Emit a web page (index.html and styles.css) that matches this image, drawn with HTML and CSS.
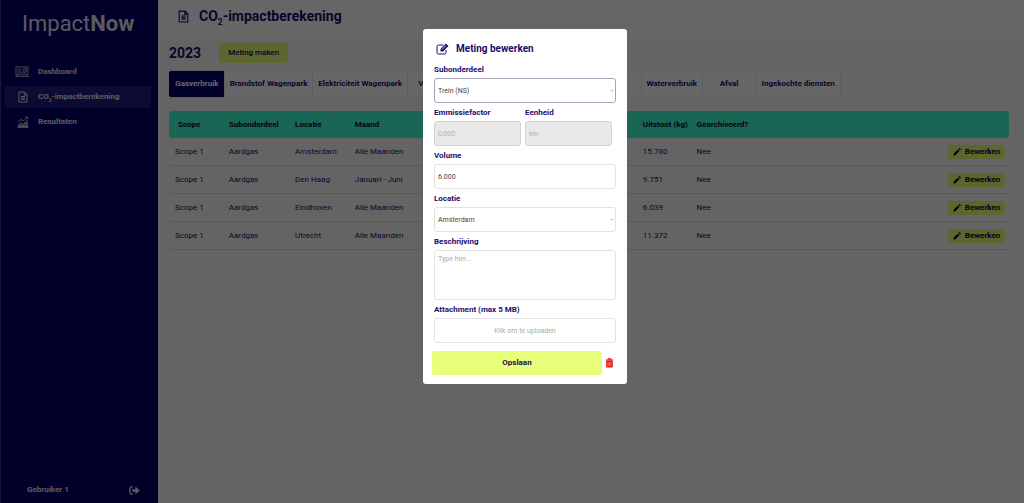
FILE: index.html
```html
<!DOCTYPE html>
<html lang="nl">
<head>
<meta charset="utf-8">
<title>ImpactNow</title>
<link rel="stylesheet" href="styles.css">
</head>
<body>
<svg class="defs" aria-hidden="true">
  <symbol id="doc" viewBox="0 0 24 24"><path d="M4 2h11l5 5v15H4zM14.500 2v6H20M8 11h8M8 14h8M8 17h8" fill="none" stroke="currentColor" stroke-width="2"/></symbol>
  <symbol id="pencil" viewBox="0 0 24 24"><path d="M1 23l2-7L14 5l5 5L8 21zM16 3l2-2q2-1 4 1t1 4l-2 2z" fill="currentColor"/></symbol>
</svg>
<div class="app">
  <aside class="sidebar">
    <div class="logo">Impact<b>Now</b></div>
    <nav class="nav">
      <a class="nav-item" href="#"><svg class="nav-icon wide" viewBox="0 0 30 24"><path d="M2 1h26v17H2zM0 22h30M5 6h8M5 10h8M5 14h18M4 18v4M26 18v4" fill="none" stroke="currentColor" stroke-width="1.600"/><circle cx="21" cy="8" r="4" fill="none" stroke="currentColor" stroke-width="1.600"/><path d="M21 8V4M21 8h4" stroke="currentColor"/></svg>Dashboard</a>
      <a class="nav-item active" href="#"><svg class="nav-icon"><use href="#doc"/></svg><span>CO<sub>2</sub>-impactberekening</span></a>
      <a class="nav-item" href="#"><svg class="nav-icon" viewBox="0 0 24 24"><path d="M1 22h22M4 22v-6M8 22v-9M12 22v-7M16 22V12M20 22V9" stroke="currentColor" stroke-width="2.600"/><path d="M2 12l6-5 5 3 8-8M16 2h5v5" fill="none" stroke="currentColor" stroke-width="1.600"/></svg>Resultaten</a>
    </nav>
    <div class="user"><span>Gebruiker 1</span><button class="logout" aria-label="Uitloggen"><svg viewBox="0 0 24 20"><path d="M9 2H5Q2 2 2 5v10q0 3 3 3h4" fill="none" stroke="currentColor" stroke-width="3"/><path d="M7 7h7V1l10 9-10 9v-6H7z" fill="currentColor"/></svg></button></div>
  </aside>
  <main class="main">
    <header class="page-head"><svg class="page-icon"><use href="#doc"/></svg><h1>CO<sub>2</sub>-impactberekening</h1></header>
    <div class="content">
      <div class="toolbar"><h2>2023</h2><button class="create">Meting maken</button></div>
      <div class="tabs" role="tablist">
        <button class="tab selected" role="tab" aria-selected="true">Gasverbruik</button>
        <button class="tab" role="tab">Brandstof Wagenpark</button>
        <button class="tab" role="tab">Elektriciteit Wagenpark</button>
        <button class="tab" role="tab">Vervoer</button>
        <button class="tab" role="tab">Zakelijk verkeer</button>
        <button class="tab" role="tab">Woon-werkverkeer</button>
        <button class="tab" role="tab">Waterverbruik</button>
        <button class="tab" role="tab">Afval</button>
        <button class="tab" role="tab">Ingekochte diensten</button>
      </div>
      <table class="data">
        <colgroup><col class="c-scope"><col class="c-sub"><col class="c-loc"><col class="c-month"><col class="c-out"><col class="c-arch"><col class="c-act"></colgroup>
        <thead><tr><th>Scope</th><th>Subonderdeel</th><th>Locatie</th><th>Maand</th><th>Uitstoot (kg)</th><th>Gearchiveerd?</th><th></th></tr></thead>
        <tbody>
          <tr><td>Scope 1</td><td>Aardgas</td><td>Amsterdam</td><td>Alle Maanden</td><td>15.780</td><td>Nee</td><td><button class="edit"><svg><use href="#pencil"/></svg>Bewerken</button></td></tr>
          <tr><td>Scope 1</td><td>Aardgas</td><td>Den Haag</td><td>Januari - Juni</td><td>9.751</td><td>Nee</td><td><button class="edit"><svg><use href="#pencil"/></svg>Bewerken</button></td></tr>
          <tr><td>Scope 1</td><td>Aardgas</td><td>Eindhoven</td><td>Alle Maanden</td><td>6.039</td><td>Nee</td><td><button class="edit"><svg><use href="#pencil"/></svg>Bewerken</button></td></tr>
          <tr><td>Scope 1</td><td>Aardgas</td><td>Utrecht</td><td>Alle Maanden</td><td>11.372</td><td>Nee</td><td><button class="edit"><svg><use href="#pencil"/></svg>Bewerken</button></td></tr>
        </tbody>
      </table>
    </div>
  </main>
</div>
<div class="overlay">
  <form class="modal" role="dialog" aria-labelledby="modal-title">
    <div class="modal-head"><svg viewBox="0 0 26 24"><path d="M20 14v5q0 3-3 3H5q-3 0-3-3V7q0-3 3-3h10" fill="none" stroke="currentColor" stroke-width="2"/><path d="M9 17v-5L20 1l5 5-11 11z" fill="currentColor"/><path d="M12 13l8-8" stroke="#fff" stroke-width="1.500"/></svg><h2 id="modal-title">Meting bewerken</h2></div>
    <div class="field"><label for="sub">Subonderdeel</label><div class="pick"><select id="sub" class="strong"><option>Trein (NS)</option></select><svg viewBox="0 0 8 5"><path d="M1 1l3 3 3-3" fill="none" stroke="currentColor" stroke-width="1.500"/></svg></div></div>
    <div class="pair">
      <div class="field"><label for="factor">Emmissiefactor</label><input id="factor" value="0,000" disabled></div>
      <div class="field"><label for="unit">Eenheid</label><input id="unit" value="km" disabled></div>
    </div>
    <div class="field"><label for="volume">Volume</label><input id="volume" value="6.000"></div>
    <div class="field"><label for="loc">Locatie</label><div class="pick"><select id="loc"><option>Amsterdam</option></select><svg viewBox="0 0 8 5"><path d="M1 1l3 3 3-3" fill="none" stroke="currentColor" stroke-width="1.500"/></svg></div></div>
    <div class="field"><label for="desc">Beschrijving</label><textarea id="desc" placeholder="Type hier..."></textarea></div>
    <div class="field"><label for="attach">Attachment (max 5 MB)</label><button type="button" id="attach" class="upload">Klik om te uploaden</button></div>
    <div class="actions"><button type="button" class="save">Opslaan</button><button type="button" class="remove" aria-label="Verwijderen"><svg viewBox="0 0 20 24"><path d="M1 5h18M7 4V2h6v2" fill="none" stroke="currentColor" stroke-width="2.500"/><path d="M2 6h16v15q0 2-2 2H4q-2 0-2-2z" fill="currentColor"/><path d="M6.500 10v9M10 10v9M13.500 10v9" stroke="#fff" stroke-width="1"/></svg></button></div>
  </form>
</div>
</body>
</html>
```
FILE: styles.css
```css
* { box-sizing: border-box; }
body { margin: 0; font-family: Roboto, "Liberation Sans", sans-serif; font-size: 8px; line-height: 10px; color: #1b0c6b; }
button, input, select, textarea { font: inherit; color: inherit; margin: 0; border: 0; padding: 0; background: none; }
h1, h2 { margin: 0; font-weight: 700; }
a { color: inherit; text-decoration: none; }
sub { font-size: 60%; line-height: 0; }
svg { display: block; flex: none; }
.defs { position: absolute; width: 0; height: 0; }

.app { display: flex; min-height: 100vh; }
.sidebar { flex: none; width: 158px; display: flex; flex-direction: column; background: #00006c; border-left: 1px solid #32329b; color: #e0e0ee; font-weight: 700; }
.logo { padding: 10px 0 0 21px; font-size: 22px; line-height: 28px; font-weight: 400; }
.logo b { font-weight: 700; }
.nav { display: flex; flex-direction: column; gap: 3px; margin: 23px 7px 0 4px; }
.nav-item { display: flex; align-items: center; height: 22px; padding-left: 10px; gap: 9px; border-radius: 2px; }
.nav-item.active { background: #1f1c80; }
.nav-icon { width: 12px; height: 12px; margin-left: 2px; }
.nav-icon.wide { width: 14px; margin-left: 0; }
.user { display: flex; align-items: center; justify-content: space-between; margin-top: auto; padding: 0 18px 8px 26px; }
.logout svg { width: 11px; height: 9px; }

.main { flex: 1; min-width: 0; background: #fbfbfb; }
.page-head { display: flex; align-items: center; gap: 9px; height: 40px; padding: 0 0 8px 19px; background: #fff; }
.page-icon { width: 13px; height: 13px; }
.page-head h1 { font-size: 14px; line-height: 18px; }
.content { padding: 3px 15px 0 11px; }
.toolbar { display: flex; align-items: center; gap: 18px; height: 20px; }
.toolbar h2 { font-size: 14px; line-height: 18px; }
.create { height: 20px; padding: 0 9px; border-radius: 2px; background: #e8ff7a; font-weight: 500; color: #170a4a; }
.tabs { display: grid; grid-template-columns: 55fr 89fr 95fr 50fr 85fr 100fr 61fr 54fr 85fr; width: 80%; height: 28px; margin-top: 7px; border: 1px solid #ebebeb; border-left: 0; border-radius: 2px; background: #fff; }
.tab { font-weight: 700; border-left: 1px solid #ebebeb; white-space: nowrap; }
.tab.selected { background: #00006c; border-color: #00006c; color: #fff; border-radius: 2px 0 0 2px; }

.data { width: 100%; margin-top: 13px; table-layout: fixed; border-collapse: separate; border-spacing: 0; }
.c-scope { width: 6.4%; }
.c-sub { width: 7.9%; }
.c-loc { width: 7.1%; }
.c-month { width: 34.3%; }
.c-out { width: 6.4%; }
.c-arch { width: 29.9%; }
.c-act { width: 8%; }
.data th { height: 27px; padding: 0 6px; background: #41ffd5; text-align: left; color: #060630; white-space: nowrap; }
.data th:first-child { padding-left: 9px; border-radius: 2px 0 0 2px; }
.data th:last-child { border-radius: 0 2px 2px 0; }
.data td { height: 28px; padding: 1px 6px 0; border-bottom: 1px solid #dedede; white-space: nowrap; }
.data td:last-child { text-align: right; }
.edit { display: inline-flex; align-items: center; gap: 4px; height: 14px; margin-right: 1px; padding: 0 5px; border-radius: 2px; background: #e8ff7a; color: #060630; font-weight: 700; }
.data td:last-child { padding-right: 6px; }
.edit svg { width: 8px; height: 8px; }

.overlay { position: fixed; inset: 0; display: flex; align-items: flex-start; justify-content: center; padding: 29px 0 0 26px; background: rgba(0, 0, 0, .6); }
.modal { display: flex; flex-direction: column; gap: 5px; width: 204px; padding: 13px 11px 9px; border-radius: 3px; background: #fff; }
.modal-head { display: flex; align-items: center; gap: 7px; height: 14px; margin-bottom: 4px; padding-left: 2px; }
.modal-head svg { width: 13px; height: 12px; }
.modal-head h2 { font-size: 10px; line-height: 14px; }
.field { display: flex; flex-direction: column; gap: 3px; }
.field label { font-weight: 700; }
.field input, .field select, .field textarea, .upload { width: 100%; height: 25px; padding: 0 3px; border: 1px solid #e2e2e6; border-radius: 3px; font-size: 7px; color: #444; }
.field select { appearance: none; }
.field select.strong { border-color: #a5a3b8; }
.field input:disabled { background: #e9e9e9; border-color: #d2d2d2; color: #b0b0b0; }
.field textarea { display: block; height: 50px; padding-top: 3px; resize: none; }
.field textarea::placeholder, .field .upload { color: #aaa; }
.pick { display: grid; align-items: center; }
.pick select, .pick svg { grid-area: 1 / 1; }
.pick svg { justify-self: end; width: 4px; height: 3px; margin-right: 2px; color: #999; pointer-events: none; }
.pair { display: grid; grid-template-columns: 1fr 1fr; gap: 4px; padding-right: 4px; }
.actions { display: flex; align-items: center; gap: 3px; margin: 3px 2px 0 -2px; }
.save { flex: 1; height: 24px; border-radius: 2px; background: #e8ff7a; font-weight: 700; color: #170a4a; }
.remove { color: #e21b1b; }
.remove svg { width: 9px; height: 10px; }
```
